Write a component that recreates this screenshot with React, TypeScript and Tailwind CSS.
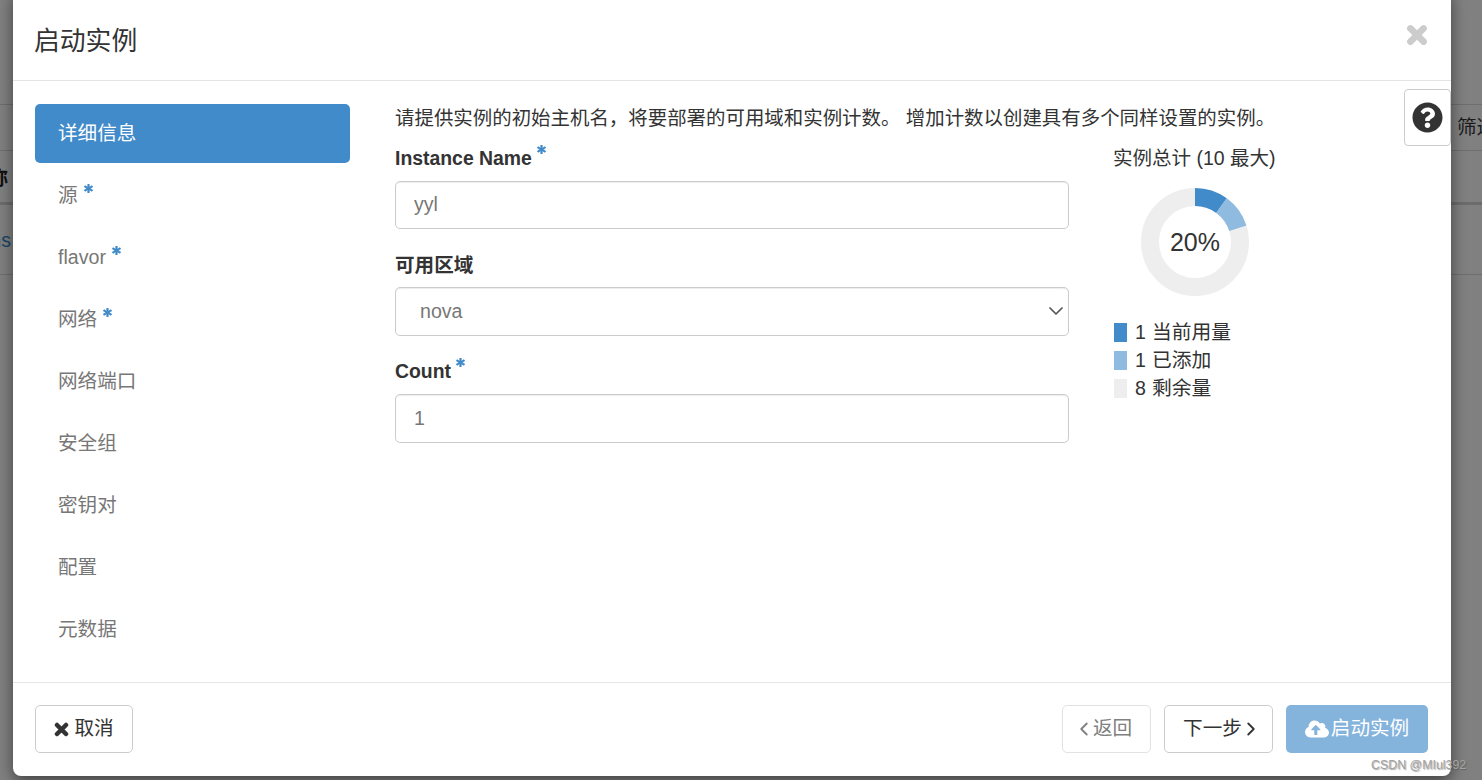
import React from 'react';
import { ChevronDown, ChevronLeft, ChevronRight } from 'lucide-react';
import { FaAsterisk, FaCloudUploadAlt, FaQuestionCircle } from 'react-icons/fa';

const navItems = [
  { label: '详细信息', active: true },
  { label: '源', required: true },
  { label: 'flavor', required: true },
  { label: '网络', required: true },
  { label: '网络端口' },
  { label: '安全组' },
  { label: '密钥对' },
  { label: '配置' },
  { label: '元数据' },
];

const legend = [
  { color: 'bg-[#428bca]', count: '1', label: '当前用量' },
  { color: 'bg-[#90bbe0]', count: '1', label: '已添加' },
  { color: 'bg-[#eeeeee]', count: '8', label: '剩余量' },
];

const Required = ({ className = '' }: { className?: string }) => (
  <FaAsterisk size={9} stroke="currentColor" strokeWidth={40} className={`inline-block text-[#428bca] align-top ${className}`} />
);

// chunky font-awesome 4 style cross
const Cross = ({ size, className = '' }: { size: number; className?: string }) => (
  <svg width={size} height={size} viewBox="0 0 20 20" className={className}>
    <path d="M4 4L16 16M16 4L4 16" fill="none" stroke="currentColor" strokeWidth="6" strokeLinecap="round" />
  </svg>
);

const PageBehind = () => (
  <div className="flex flex-col h-full">
    <div className="h-[105px] border-b border-[#6e6e6e]" />
    <div className="h-[46px] flex justify-end border-b border-[#6e6e6e] overflow-hidden">
      <span className="w-[25px] whitespace-nowrap overflow-hidden text-[19.6px] leading-[45px] text-[#1a1a1a]">筛选</span>
    </div>
    <div className="h-[54px] border-b-[3px] border-[#6c6c6c] overflow-hidden">
      <span className="block ml-[-31px] mt-[12px] font-bold leading-[30px] text-[#111]">名称</span>
    </div>
    <div className="h-[70px] border-b border-[#6e6e6e] overflow-hidden">
      <span className="block ml-[-14px] mt-[21px] leading-[28px] text-[#1b4466]">ins</span>
    </div>
  </div>
);

const App = () => {
  return (
    <div className="relative w-[1482px] h-[780px] overflow-hidden bg-[#808080] font-['Liberation_Sans','Noto_Sans_CJK_SC',sans-serif] text-[19.6px] text-[#333333]">
      <PageBehind />

      <div className="absolute left-[13px] top-[-10px] w-[1438px] h-[786px] flex flex-col bg-white rounded-[8px] shadow-[0_5px_15px_rgba(0,0,0,0.5)]">
        <div className="h-[91px] shrink-0 pt-[11px] pl-[21px] pr-[24px] flex items-center justify-between border-b border-[#e5e5e5]">
          <h4 className="text-[25.8px] leading-[36px]">启动实例</h4>
          <Cross size={22} className="text-[#cccccc] mt-[-12px] mr-[-1px]" />
        </div>

        <div className="relative flex-1 flex min-h-0">
          <ul className="w-[315px] ml-[22px] mt-[23px] flex flex-col gap-[3px] shrink-0">
            {navItems.map((item) => (
              <li
                key={item.label}
                className={`h-[59px] pl-[23px] pt-[1px] flex items-center rounded-[5px] ${item.active ? 'bg-[#428bca] text-white' : 'text-[#777777]'}`}
              >
                {item.label}
                {item.required && <Required className="ml-[6px] mt-[-15px] self-center" />}
              </li>
            ))}
          </ul>

          <div className="flex-1 ml-[45px] pt-[23px]">
            <p className="text-[19.45px] leading-[28px] whitespace-nowrap">请提供实例的初始主机名，将要部署的可用域和实例计数。 增加计数以创建具有多个同样设置的实例。</p>
            <div className="flex mt-[12px]">
              <div className="w-[674px] shrink-0 flex flex-col">
                <label className="font-bold text-[19.4px] leading-[28px]">
                  Instance Name <Required className="mt-[1px]" />
                </label>
                <input
                  readOnly
                  value="yyl"
                  className="mt-[9px] h-[48px] px-[18px] pb-[2px] border border-[#cccccc] rounded-[5px] text-[#777777] shadow-[inset_0_1px_1px_rgba(0,0,0,0.075)] outline-none"
                />
                <label className="mt-[22px] font-bold leading-[28px]">可用区域</label>
                <div className="relative mt-[8px]">
                  <select className="w-full h-[49px] pl-[24px] pr-[8px] pt-[1px] appearance-none border border-[#cccccc] rounded-[5px] bg-white text-[#777777] shadow-[inset_0_1px_1px_rgba(0,0,0,0.075)] outline-none">
                    <option>nova</option>
                  </select>
                  <ChevronDown size={24} strokeWidth={1.7} className="absolute right-[1px] top-[12px] text-[#555555] pointer-events-none" />
                </div>
                <label className="mt-[21px] font-bold text-[19.4px] leading-[28px]">
                  Count <Required className="mt-[1px]" />
                </label>
                <input
                  readOnly
                  value="1"
                  className="mt-[9px] h-[49px] px-[18px] border border-[#cccccc] rounded-[5px] text-[#777777] shadow-[inset_0_1px_1px_rgba(0,0,0,0.075)] outline-none"
                />
              </div>

              <div className="ml-[44px] w-[200px]">
                <div className="text-[19.5px] leading-[28px] whitespace-nowrap">实例总计 (10 最大)</div>
                <div className="relative w-[108px] h-[108px] ml-[28px] mt-[16px]">
                  <svg viewBox="0 0 108 108" className="w-full h-full -rotate-90">
                    <circle cx="54" cy="54" r="45" fill="none" stroke="#eeeeee" strokeWidth="18" />
                    <circle cx="54" cy="54" r="45" fill="none" stroke="#428bca" strokeWidth="18" strokeDasharray="28.27 282.74" />
                    <circle cx="54" cy="54" r="45" fill="none" stroke="#90bbe0" strokeWidth="18" strokeDasharray="28.27 282.74" strokeDashoffset="-28.27" />
                  </svg>
                  <div className="absolute inset-0 pt-[2px] flex items-center justify-center text-[25px]">20%</div>
                </div>
                <div className="mt-[22px] flex flex-col">
                  {legend.map((row) => (
                    <div key={row.label} className="h-[28px] flex items-center">
                      <span className={`ml-[1px] w-[13px] h-[19px] ${row.color}`} />
                      <span className="ml-[8px] pt-[2px]">{row.count}</span>
                      <span className="ml-[6px] pt-[2px] text-[19.8px]">{row.label}</span>
                    </div>
                  ))}
                </div>
              </div>
            </div>
          </div>

          <div className="absolute right-0 top-[8px] w-[47px] h-[57px] flex items-center justify-center bg-white border border-[#cccccc] rounded-[4px]">
            <FaQuestionCircle size={31} className="text-[#333333]" />
          </div>
        </div>

        <div className="h-[94px] shrink-0 px-[22px] pb-[1px] flex items-center justify-between border-t border-[#e5e5e5]">
          <button className="h-[48px] w-[98px] flex items-center justify-center gap-[5px] border border-[#cccccc] rounded-[5px] bg-white">
            <Cross size={15} />
            取消
          </button>
          <div className="flex items-center gap-[13px] mr-[1px]">
            <button className="h-[48px] w-[89px] flex items-center justify-center gap-[6px] border border-[#e2e2e2] rounded-[5px] bg-white text-[#808080]">
              <ChevronLeft size={22} strokeWidth={2} className="-mx-[8px]" />
              返回
            </button>
            <button className="h-[48px] w-[109px] flex items-center justify-center gap-[6px] border border-[#cccccc] rounded-[5px] bg-white">
              下一步
              <ChevronRight size={22} strokeWidth={2} className="-mx-[8px]" />
            </button>
            <button className="h-[48px] w-[142px] flex items-center justify-center gap-[2px] rounded-[5px] bg-[#84b3dc] text-white">
              <FaCloudUploadAlt size={24} />
              启动实例
            </button>
          </div>
        </div>
      </div>

      <div className="absolute left-[1371px] top-[757px] text-[12.4px] leading-[16px] text-[#a3a3a3] [text-shadow:1px_1px_1px_rgba(70,70,70,0.45)] whitespace-nowrap">
        CSDN @MIul392
      </div>
    </div>
  );
};

export default App;
